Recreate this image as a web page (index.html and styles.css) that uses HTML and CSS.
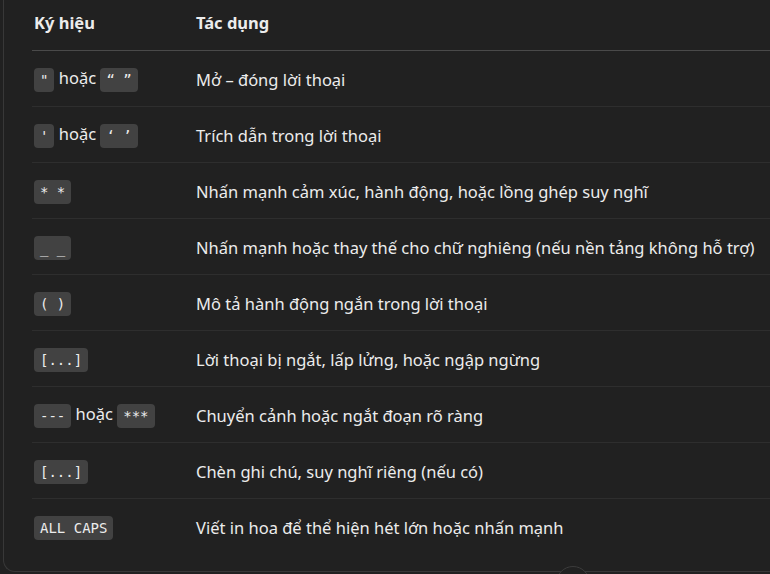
FILE: index.html
```html
<!DOCTYPE html>
<html lang="vi">
<head>
<meta charset="utf-8">
<link rel="stylesheet" href="styles.css">
</head>
<body>
<div class="card">
  <table class="symbols">
    <thead>
      <tr><th class="c1">Ký hiệu</th><th>Tác dụng</th></tr>
    </thead>
    <tbody>
      <tr><td class="c1"><code>"</code> hoặc <code>“ ”</code></td><td>Mở – đóng lời thoại</td></tr>
      <tr><td class="c1"><code>'</code> hoặc <code>‘ ’</code></td><td>Trích dẫn trong lời thoại</td></tr>
      <tr><td class="c1"><code>* *</code></td><td>Nhấn mạnh cảm xúc, hành động, hoặc lồng ghép suy nghĩ</td></tr>
      <tr><td class="c1"><code>_ _</code></td><td>Nhấn mạnh hoặc thay thế cho chữ nghiêng (nếu nền tảng không hỗ trợ)</td></tr>
      <tr><td class="c1"><code>( )</code></td><td>Mô tả hành động ngắn trong lời thoại</td></tr>
      <tr><td class="c1"><code>[...]</code></td><td>Lời thoại bị ngắt, lấp lửng, hoặc ngập ngừng</td></tr>
      <tr><td class="c1"><code>---</code> hoặc <code>***</code></td><td>Chuyển cảnh hoặc ngắt đoạn rõ ràng</td></tr>
      <tr><td class="c1"><code>[...]</code></td><td>Chèn ghi chú, suy nghĩ riêng (nếu có)</td></tr>
      <tr class="last"><td class="c1"><code>ALL CAPS</code></td><td>Viết in hoa để thể hiện hét lớn hoặc nhấn mạnh</td></tr>
    </tbody>
  </table>
</div>
<div class="scroll-btn"></div>
</body>
</html>
```
FILE: styles.css
```css
html, body {
  margin: 0;
  padding: 0;
  background: #212121;
  overflow: hidden;
  height: 574px;
}
body {
  position: relative;
  font-family: "Noto Sans", "Open Sans", sans-serif;
  color: #ececec;
  font-size: 16.5px;
}
.card {
  margin-left: 3px;
  height: 572px;
  box-sizing: border-box;
  border-left: 1px solid #383838;
  border-bottom: 1px solid #383838;
  border-bottom-left-radius: 12px;
  padding-left: 28px;
}
.symbols {
  border-collapse: collapse;
  width: 100%;
}
.symbols th {
  text-align: left;
  font-weight: 700;
  height: 50px;
  padding: 0 0 4px 2px;
  vertical-align: middle;
  border-bottom: 1px solid #4a4a4a;
  box-sizing: border-box;
}
.symbols td {
  height: 56px;
  box-sizing: border-box;
  padding: 2px 0 0 2px;
  vertical-align: middle;
  border-bottom: 1px solid #2e2e2e;
  white-space: nowrap;
}
.symbols tr.last td {
  border-bottom: none;
}
.c1 {
  width: 162px;
}
code {
  display: inline-block;
  font-family: "DejaVu Sans Mono", "Liberation Mono", monospace;
  font-size: 14px;
  line-height: 24px;
  background: #424242;
  border-radius: 4px;
  padding: 0 6px;
  color: #ececec;
  vertical-align: middle;
}
.scroll-btn {
  position: absolute;
  left: 556px;
  top: 566px;
  width: 32px;
  height: 32px;
  border-radius: 50%;
  border: 1px solid #3c3c3c;
  background: #212121;
}
```
